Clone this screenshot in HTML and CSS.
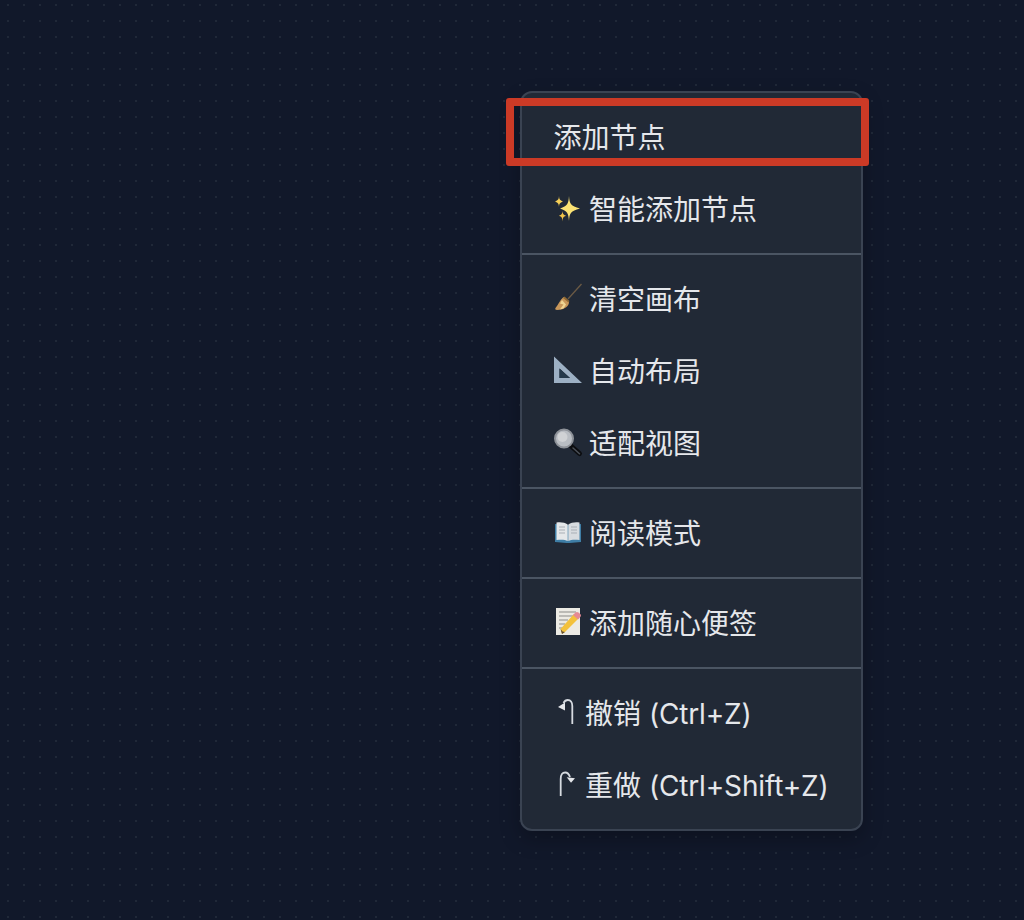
FILE: index.html
```html
<!DOCTYPE html>
<html lang="zh-CN">

<head>
    <meta charset="UTF-8">
    <meta name="viewport" content="width=device-width, initial-scale=1.0">
    <title>画布菜单</title>
    <link rel="stylesheet" href="styles.css">
</head>

<body>
    <div class="canvas">
        <div class="menu">
            <div class="menu-group">
                <div class="menu-item">添加节点</div>
                <div class="menu-item">
                    <svg class="icon" viewBox="0 0 28 28">
                        <path d="M15 1 C15.600 9 16.500 10.600 26 13.500 C16.500 16.200 15.600 18 15 26 C14.400 18 13.500 16.200 6 13.500 C13.500 10.600 14.400 9 15 1Z" fill="#fbe274"/>
                        <path d="M5 1 C5.300 4.500 5.800 5.200 9 6.500 C5.800 7.800 5.300 8.500 5 12 C4.700 8.500 4.200 7.800 1 6.500 C4.200 5.200 4.700 4.500 5 1Z" fill="#f6cf57"/>
                        <path d="M8.500 16 C8.800 19 9.200 19.600 12 20.800 C9.200 22 8.800 22.600 8.500 26.500 C8.200 22.600 7.800 22 5 20.800 C7.800 19.600 8.200 19 8.500 16Z" fill="#f2c44a"/>
                    </svg>
                    <span>智能添加节点</span>
                </div>
            </div>
            <div class="menu-group">
                <div class="menu-item">
                    <svg class="icon" viewBox="0 0 28 28">
                        <path d="M27.500 -1 L14 14" stroke="#6b5a45" stroke-width="1.300" fill="none"/>
                        <path d="M9.500 12 L15 16.500 C15.500 20.500 11 25 3 25 C1.500 25 0.800 24 1.500 23 C4 20 6 15 9.500 12Z" fill="#c9975a"/>
                        <path d="M8 15 L12 19.500 L9.500 23.500 L6 24.200 L9.500 19.500 L6 18.500Z" fill="#efd593"/>
                        <path d="M10.500 11.500 L15.500 16 L14.500 17.500 L9 13Z" fill="#8f6a35"/>
                    </svg>
                    <span>清空画布</span>
                </div>
                <div class="menu-item">
                    <svg class="icon" viewBox="0 0 28 28">
                        <path fill-rule="evenodd" d="M0 -0.500 L28 26 L0 26Z M5.500 11.500 L5.500 21 L16 21Z" fill="#9db0c4"/>
                        <path d="M5.500 11.500 L5.500 21 L16 21Z" fill="#24384a"/>
                    </svg>
                    <span>自动布局</span>
                </div>
                <div class="menu-item">
                    <svg class="icon" viewBox="0 0 28 28">
                        <path d="M17 17 L25.500 24.500" stroke="#0c0d10" stroke-width="5" stroke-linecap="round"/>
                        <path d="M19 19 L25.500 24.800" stroke="#4b5058" stroke-width="1.500" stroke-linecap="round"/>
                        <circle cx="10" cy="9.500" r="9" fill="#b9bdc3" stroke="#8e9299" stroke-width="2"/>
                        <circle cx="8.500" cy="8" r="5" fill="#d0d2d5"/>
                    </svg>
                    <span>适配视图</span>
                </div>
            </div>
            <div class="menu-group">
                <div class="menu-item">
                    <svg class="icon" viewBox="0 0 28 28">
                        <path d="M1 5 L13.500 6 L14.500 6 L27 5 L27 23 L15.500 24 L12.500 24 L1 23Z" fill="#3f7ea6"/>
                        <path d="M2.500 3.500 C7 3 11 3.500 13.700 5.500 L13.700 22 C11 20.500 7 20.500 2.500 21Z" fill="#e5e8ea"/>
                        <path d="M25.500 3.500 C21 3 17 3.500 14.300 5.500 L14.300 22 C17 20.500 21 20.500 25.500 21Z" fill="#d8dce0"/>
                        <path d="M5 8 H11 M5 11 H11 M5 14 H11 M17 8 H23 M17 11 H23 M17 14 H23" stroke="#a9afb6" stroke-width="1"/>
                    </svg>
                    <span>阅读模式</span>
                </div>
            </div>
            <div class="menu-group">
                <div class="menu-item">
                    <svg class="icon" viewBox="0 0 28 28">
                        <rect x="2" y="-1" width="24" height="27" fill="#eceae4"/>
                        <path d="M5 3 H22 M5 7 H20 M5 11 H14 M5 15 H11 M5 19 H9" stroke="#8b8b88" stroke-width="1"/>
                        <path d="M8 25 L6.500 20 L20 5 L25 9 L11 23Z" fill="#f3c13c"/>
                        <path d="M19 6 L21.500 3.500 C22.500 2.700 23.500 2.700 24.500 3.500 L26.500 5.300 C27.200 6.200 27 7.200 26.300 8 L24 10.500Z" fill="#e58a94"/>
                        <path d="M8 25 L6.500 20 L8.500 22.500 L11 23Z" fill="#5b4a35"/>
                    </svg>
                    <span>添加随心便签</span>
                </div>
            </div>
            <div class="menu-group">
                <div class="menu-item">
                    <svg class="icon icon-arrow" viewBox="0 0 24 28">
                        <path d="M18.300 25 L18.300 7 C18.300 3 16.500 1 13.800 1 C12 1 10.500 2 9.500 4" stroke="#d6dae0" stroke-width="1.800" fill="none"/>
                        <path d="M4 8 L11 3.500 L11 11.500Z" fill="#e5e7eb"/>
                    </svg>
                    <span>撤销 <span class="keys">(Ctrl+Z)</span></span>
                </div>
                <div class="menu-item">
                    <svg class="icon icon-arrow" viewBox="0 0 24 28">
                        <path d="M6.700 25 L6.700 8 C6.700 3.500 8.500 1.500 11.200 1.500 C13.500 1.500 15 3 16 6" stroke="#d6dae0" stroke-width="1.800" fill="none"/>
                        <path d="M12.700 6.300 L21 7.300 L17 11.800Z" fill="#e5e7eb"/>
                    </svg>
                    <span>重做 <span class="keys">(Ctrl+Shift+Z)</span></span>
                </div>
            </div>
        </div>
        <div class="highlight"></div>
    </div>
</body>

</html>
```

FILE: styles.css
```css
* {
    margin: 0;
    padding: 0;
    box-sizing: border-box;
}

body {
    font-family: 'Inter', 'Noto Sans CJK SC', sans-serif;
    background: #11182a;
    color: #e5e7eb;
}

.canvas {
    position: relative;
    width: 1024px;
    height: 920px;
    overflow: hidden;
    background-image: radial-gradient(circle, #202838 1px, transparent 1.2px);
    background-size: 16px 16px;
    background-position: 0 -3px;
}

.menu {
    position: absolute;
    left: 520px;
    top: 91px;
    width: 343px;
    background-color: #212936;
    border: 2px solid #3a4352;
    border-radius: 12px;
    box-shadow: 0 8px 20px rgba(0, 0, 0, 0.25);
}

.menu-group {
    padding: 8px 0;
    border-bottom: 2px solid #4b5563;
}

.menu-group:last-child {
    border-bottom: none;
}

.menu-item {
    display: flex;
    align-items: center;
    gap: 7.500px;
    height: 72px;
    padding: 0 32px 2px 31.500px;
    font-size: 28px;
    white-space: nowrap;
}

.keys {
    letter-spacing: -0.150px;
}

.icon {
    flex: none;
    width: 28px;
    height: 28px;
    margin-bottom: -2px;
    overflow: visible;
}

.icon-arrow {
    width: 24px;
}

.highlight {
    position: absolute;
    left: 506px;
    top: 98px;
    width: 363px;
    height: 68px;
    border: 8px solid #cb3a26;
    border-radius: 3px;
}
```
